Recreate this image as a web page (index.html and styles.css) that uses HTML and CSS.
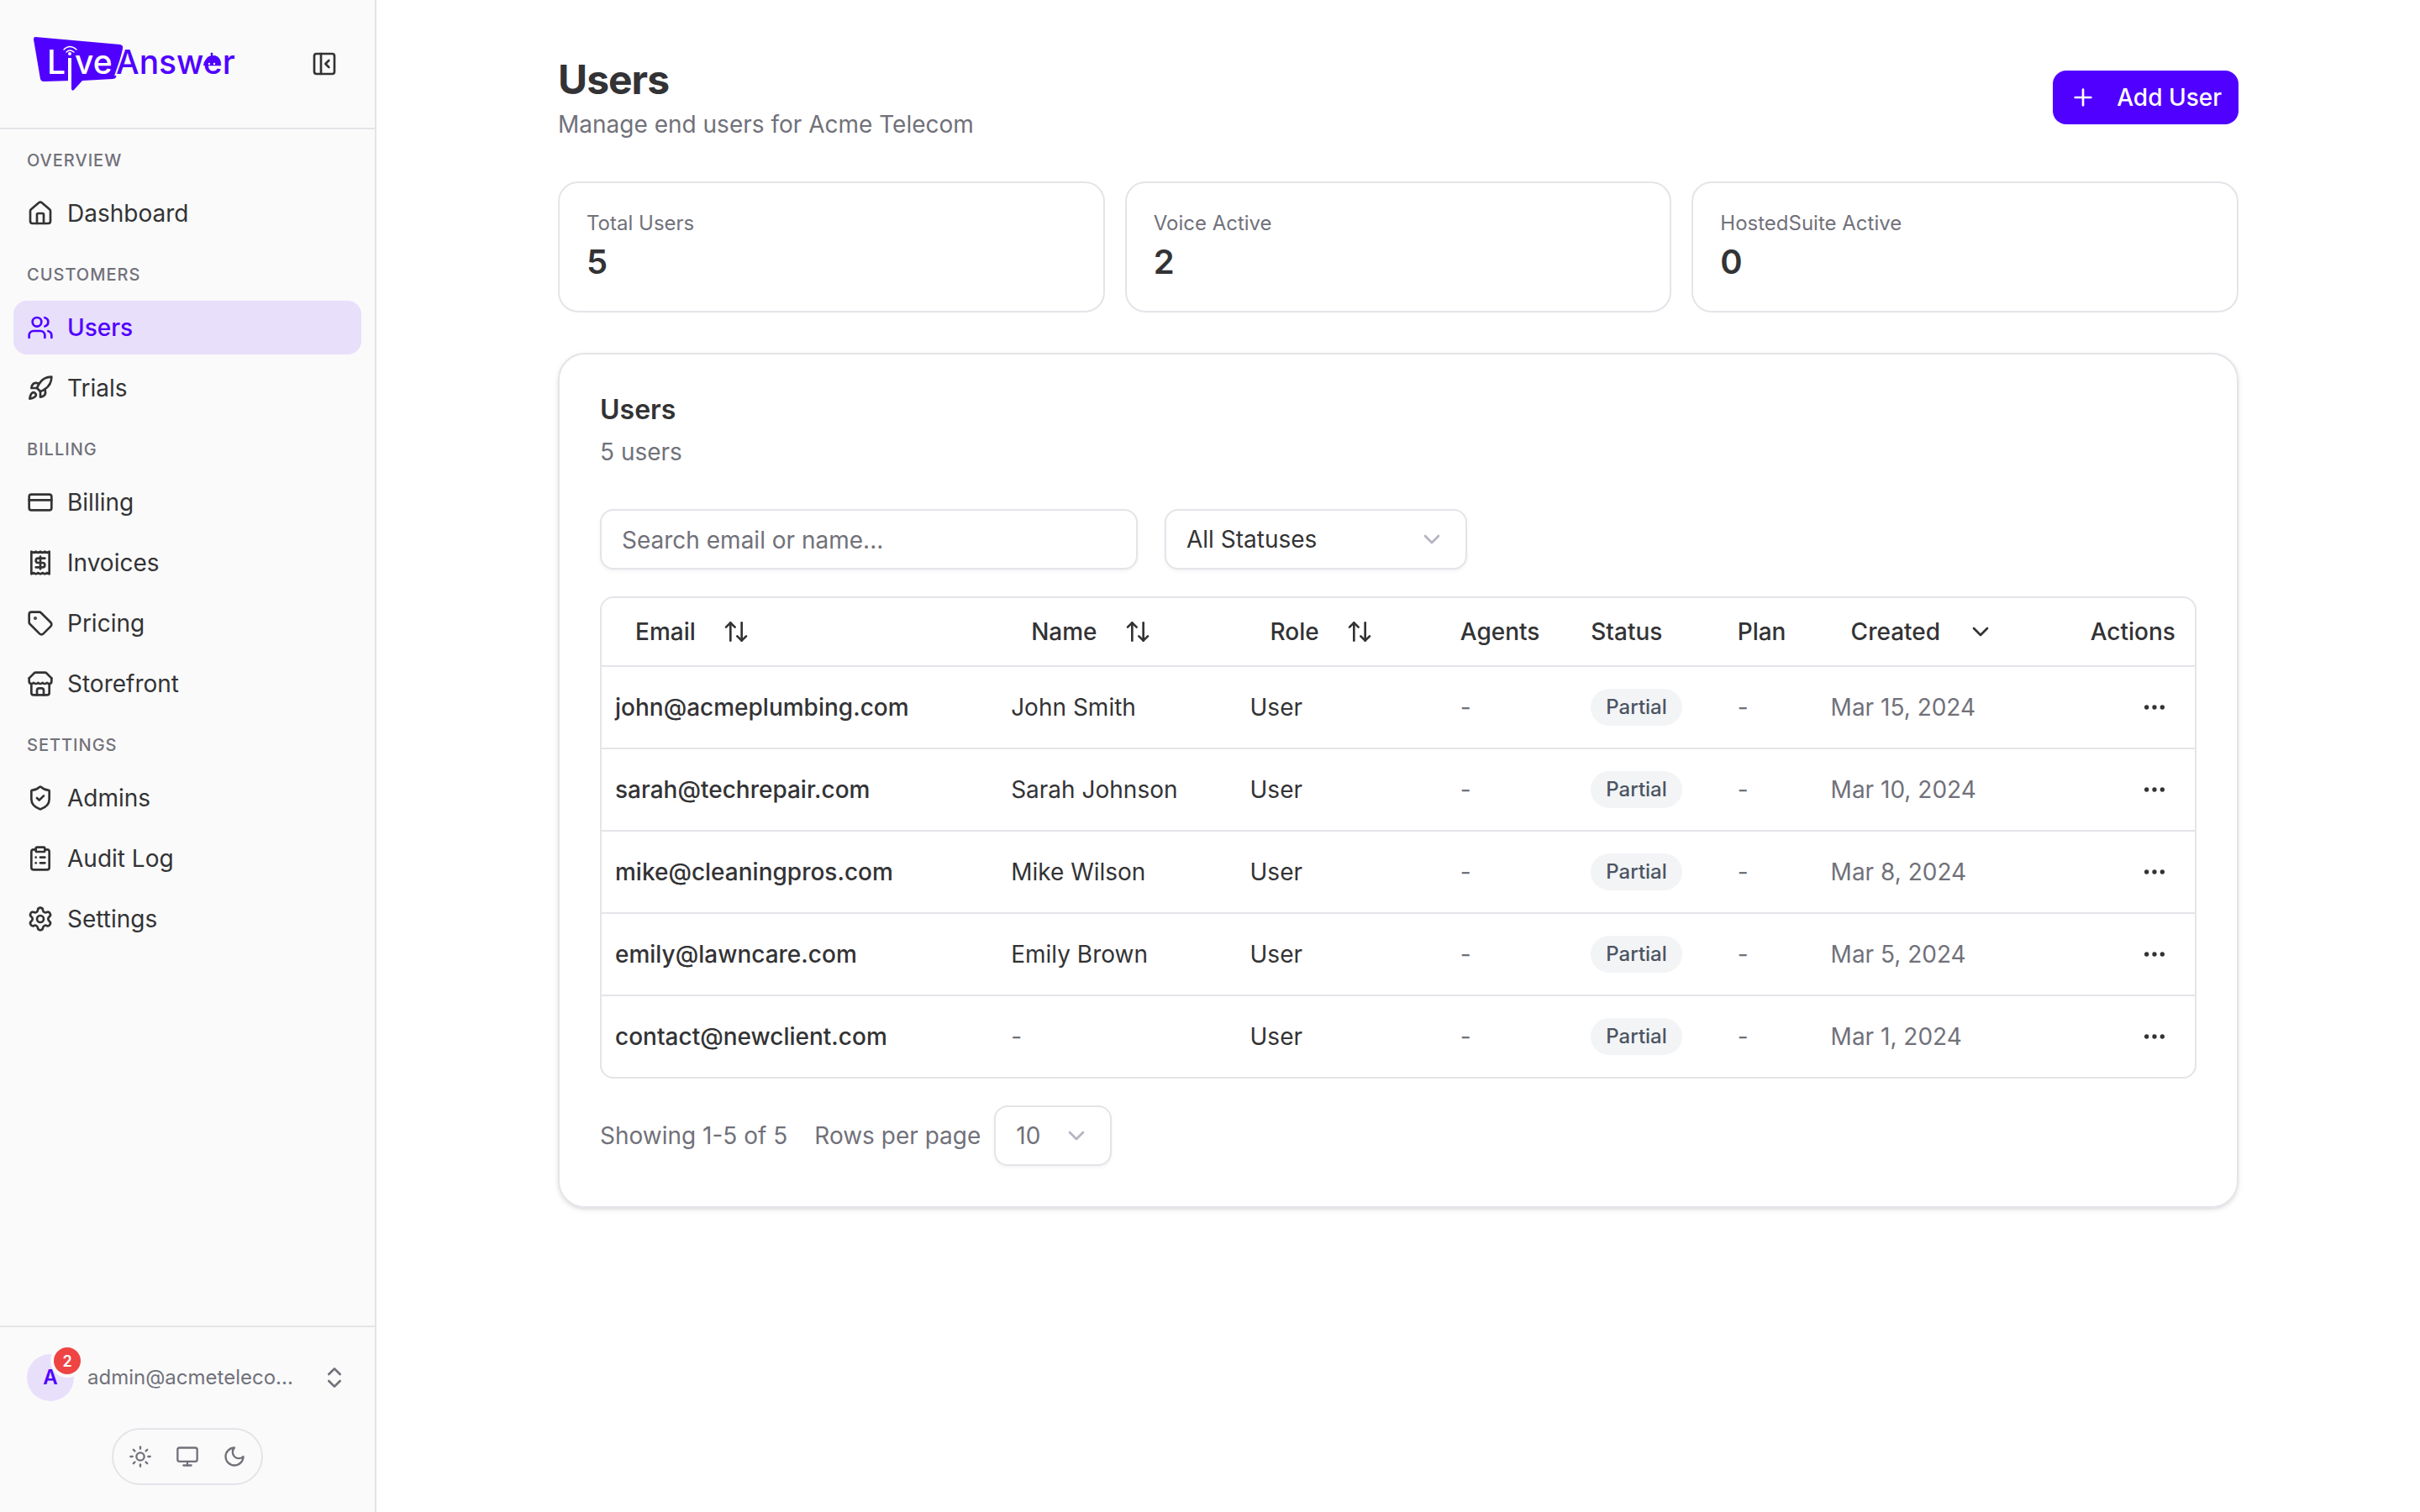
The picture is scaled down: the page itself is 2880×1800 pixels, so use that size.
FILE: index.html
```html
<!DOCTYPE html>
<html lang="en">
<head>
<meta charset="utf-8">
<title>Users - LiveAnswer</title>
<meta name="viewport" content="width=device-width, initial-scale=1">
<link rel="stylesheet" href="styles.css">
</head>
<body>
<svg class="sprite" aria-hidden="true">
  <symbol id="i-panel" viewBox="0 0 24 24"><rect width="18" height="18" x="3" y="3" rx="2"/><path d="M9 3v18"/><path d="m16 15-3-3 3-3"/></symbol>
  <symbol id="i-house" viewBox="0 0 24 24"><path d="M15 21v-8a1 1 0 0 0-1-1h-4a1 1 0 0 0-1 1v8"/><path d="M3 10a2 2 0 0 1 .709-1.528l7-5.999a2 2 0 0 1 2.582 0l7 5.999A2 2 0 0 1 21 10v9a2 2 0 0 1-2 2H5a2 2 0 0 1-2-2z"/></symbol>
  <symbol id="i-users" viewBox="0 0 24 24"><path d="M16 21v-2a4 4 0 0 0-4-4H6a4 4 0 0 0-4 4v2"/><circle cx="9" cy="7" r="4"/><path d="M22 21v-2a4 4 0 0 0-3-3.87"/><path d="M16 3.13a4 4 0 0 1 0 7.75"/></symbol>
  <symbol id="i-rocket" viewBox="0 0 24 24"><path d="M4.5 16.5c-1.5 1.26-2 5-2 5s3.74-.5 5-2c.71-.84.7-2.13-.09-2.91a2.18 2.18 0 0 0-2.91-.09z"/><path d="m12 15-3-3a22 22 0 0 1 2-3.95A12.88 12.88 0 0 1 22 2c0 2.72-.78 7.5-6 11a22.35 22.35 0 0 1-4 2z"/><path d="M9 12H4s.55-3.03 2-4c1.62-1.08 5 0 5 0"/><path d="M12 15v5s3.03-.55 4-2c1.08-1.62 0-5 0-5"/></symbol>
  <symbol id="i-card" viewBox="0 0 24 24"><rect width="20" height="14" x="2" y="5" rx="2"/><path d="M2 10h20"/></symbol>
  <symbol id="i-receipt" viewBox="0 0 24 24"><path d="M4 2v20l2-1 2 1 2-1 2 1 2-1 2 1 2-1 2 1V2l-2 1-2-1-2 1-2-1-2 1-2-1-2 1Z"/><path d="M16 8h-6a2 2 0 1 0 0 4h4a2 2 0 1 1 0 4H8"/><path d="M12 17.500v-11"/></symbol>
  <symbol id="i-tag" viewBox="0 0 24 24"><path d="M12.586 2.586A2 2 0 0 0 11.172 2H4a2 2 0 0 0-2 2v7.172a2 2 0 0 0 .586 1.414l8.704 8.704a2.426 2.426 0 0 0 3.420 0l6.580-6.580a2.426 2.426 0 0 0 0-3.420z"/><circle cx="7.500" cy="7.500" r=".5" fill="currentColor"/></symbol>
  <symbol id="i-store" viewBox="0 0 24 24"><path d="m2 7 4.410-4.410A2 2 0 0 1 7.830 2h8.340a2 2 0 0 1 1.420.590L22 7"/><path d="M4 12v8a2 2 0 0 0 2 2h12a2 2 0 0 0 2-2v-8"/><path d="M15 22v-4a2 2 0 0 0-2-2h-2a2 2 0 0 0-2 2v4"/><path d="M22 7v3a2 2 0 0 1-2 2a2.700 2.700 0 0 1-1.590-.630.700.700 0 0 0-.820 0A2.700 2.700 0 0 1 16 12a2.700 2.700 0 0 1-1.590-.630.700.700 0 0 0-.820 0A2.700 2.700 0 0 1 12 12a2.700 2.700 0 0 1-1.590-.630.700.700 0 0 0-.820 0A2.700 2.700 0 0 1 8 12a2.700 2.700 0 0 1-1.590-.630.700.700 0 0 0-.820 0A2.700 2.700 0 0 1 4 12a2 2 0 0 1-2-2V7"/></symbol>
  <symbol id="i-shield" viewBox="0 0 24 24"><path d="M20 13c0 5-3.500 7.500-7.660 8.950a1 1 0 0 1-.670-.010C7.500 20.500 4 18 4 13V6a1 1 0 0 1 1-1c2 0 4.500-1.200 6.240-2.720a1.170 1.170 0 0 1 1.520 0C14.510 3.810 17 5 19 5a1 1 0 0 1 1 1z"/><path d="m9 12 2 2 4-4"/></symbol>
  <symbol id="i-clipboard" viewBox="0 0 24 24"><rect width="8" height="4" x="8" y="2" rx="1"/><path d="M16 4h2a2 2 0 0 1 2 2v14a2 2 0 0 1-2 2H6a2 2 0 0 1-2-2V6a2 2 0 0 1 2-2h2"/><path d="M12 11h4"/><path d="M12 16h4"/><path d="M8 11h.01"/><path d="M8 16h.01"/></symbol>
  <symbol id="i-gear" viewBox="0 0 24 24"><path d="M9.671 4.136a2.340 2.340 0 0 1 4.659 0 2.340 2.340 0 0 0 3.319 1.915 2.340 2.340 0 0 1 2.330 4.033 2.340 2.340 0 0 0 0 3.831 2.340 2.340 0 0 1-2.330 4.033 2.340 2.340 0 0 0-3.319 1.915 2.340 2.340 0 0 1-4.659 0 2.340 2.340 0 0 0-3.320-1.915 2.340 2.340 0 0 1-2.330-4.033 2.340 2.340 0 0 0 0-3.831A2.340 2.340 0 0 1 6.350 6.051a2.340 2.340 0 0 0 3.319-1.915"/><circle cx="12" cy="12" r="3"/></symbol>
  <symbol id="i-updown" viewBox="0 0 24 24"><path d="m7 15 5 5 5-5"/><path d="m7 9 5-5 5 5"/></symbol>
  <symbol id="i-sun" viewBox="0 0 24 24"><circle cx="12" cy="12" r="4"/><path d="M12 2v2"/><path d="M12 20v2"/><path d="m4.930 4.930 1.410 1.410"/><path d="m17.660 17.660 1.410 1.410"/><path d="M2 12h2"/><path d="M20 12h2"/><path d="m6.340 17.660-1.410 1.410"/><path d="m19.070 4.930-1.410 1.410"/></symbol>
  <symbol id="i-monitor" viewBox="0 0 24 24"><rect width="20" height="14" x="2" y="3" rx="2"/><path d="M8 21h8"/><path d="M12 17v4"/></symbol>
  <symbol id="i-moon" viewBox="0 0 24 24"><path d="M12 3a6 6 0 0 0 9 9 9 9 0 1 1-9-9Z"/></symbol>
  <symbol id="i-plus" viewBox="0 0 24 24"><path d="M5 12h14"/><path d="M12 5v14"/></symbol>
  <symbol id="i-sort" viewBox="0 0 24 24"><path d="m21 16-4 4-4-4"/><path d="M17 20V4"/><path d="m3 8 4-4 4 4"/><path d="M7 4v16"/></symbol>
  <symbol id="i-down" viewBox="0 0 24 24"><path d="m6 9 6 6 6-6"/></symbol>
  <symbol id="i-dots" viewBox="0 0 24 24"><circle cx="12" cy="12" r="1"/><circle cx="19" cy="12" r="1"/><circle cx="5" cy="12" r="1"/></symbol>
</svg>

<div class="app">
  <aside class="sidebar">
    <header class="brand">
      <a href="#" class="brand-link" aria-label="LiveAnswer">
        <svg class="logo" viewBox="0 0 244 68">
          <path class="logo-fill" d="M4 2 105 11Q109 12 108 16L100 50Q99 52 96 52L60 54 50 65Q48 67 47 64V54L14 55Q11 55 10 52L2 5Q2 2 4 2Z"/>
          <path class="logo-wave" d="M38 17q7-7 15 0M41 20q4-4 9 0"/>
          <circle class="logo-dot" cx="45" cy="22" r="2"/>
          <path class="logo-stem" d="M45 27V60"/>
          <text class="logo-live" x="18" y="46">L</text>
          <text class="logo-live" x="51" y="46">ve</text>
          <text class="logo-answer" x="100" y="46">Answer</text>
          <path class="logo-fill" d="M204 36a10 10 0 0 1 20 0zM213 22h2v5h-2z"/>
          <circle class="logo-fill" cx="214" cy="22" r="1.500"/>
          <circle class="logo-dot" cx="211" cy="34" r="1.200"/>
          <circle class="logo-dot" cx="217" cy="34" r="1.200"/>
        </svg>
      </a>
      <button class="icon-button" type="button" aria-label="Collapse sidebar"><svg class="icon"><use href="#i-panel"/></svg></button>
    </header>

    <nav class="nav" aria-label="Main">
      <h2 class="nav-label">Overview</h2>
      <a class="nav-item" href="#"><svg class="icon"><use href="#i-house"/></svg>Dashboard</a>
      <h2 class="nav-label">Customers</h2>
      <a class="nav-item nav-item-active" href="#" aria-current="page"><svg class="icon"><use href="#i-users"/></svg>Users</a>
      <a class="nav-item" href="#"><svg class="icon"><use href="#i-rocket"/></svg>Trials</a>
      <h2 class="nav-label">Billing</h2>
      <a class="nav-item" href="#"><svg class="icon"><use href="#i-card"/></svg>Billing</a>
      <a class="nav-item" href="#"><svg class="icon"><use href="#i-receipt"/></svg>Invoices</a>
      <a class="nav-item" href="#"><svg class="icon"><use href="#i-tag"/></svg>Pricing</a>
      <a class="nav-item" href="#"><svg class="icon"><use href="#i-store"/></svg>Storefront</a>
      <h2 class="nav-label">Settings</h2>
      <a class="nav-item" href="#"><svg class="icon"><use href="#i-shield"/></svg>Admins</a>
      <a class="nav-item" href="#"><svg class="icon"><use href="#i-clipboard"/></svg>Audit Log</a>
      <a class="nav-item" href="#"><svg class="icon"><use href="#i-gear"/></svg>Settings</a>
    </nav>

    <footer class="account">
      <button class="account-button" type="button">
        <span class="avatar">A<span class="avatar-count">2</span></span>
        <span class="account-email">admin@acmeteleco...</span>
        <svg class="icon"><use href="#i-updown"/></svg>
      </button>
      <div class="theme" role="group" aria-label="Theme">
        <button class="theme-button" type="button" aria-label="Light"><svg class="icon icon-small"><use href="#i-sun"/></svg></button>
        <button class="theme-button" type="button" aria-label="System"><svg class="icon icon-small"><use href="#i-monitor"/></svg></button>
        <button class="theme-button" type="button" aria-label="Dark"><svg class="icon icon-small"><use href="#i-moon"/></svg></button>
      </div>
    </footer>
  </aside>

  <main class="main">
    <div class="content">
      <header class="page-header">
        <div>
          <h1 class="page-title">Users</h1>
          <p class="muted">Manage end users for Acme Telecom</p>
        </div>
        <button class="primary-button" type="button"><svg class="icon"><use href="#i-plus"/></svg>Add User</button>
      </header>

      <section class="stats" aria-label="Summary">
        <div class="stat"><p class="stat-label">Total Users</p><p class="stat-value">5</p></div>
        <div class="stat"><p class="stat-label">Voice Active</p><p class="stat-value">2</p></div>
        <div class="stat"><p class="stat-label">HostedSuite Active</p><p class="stat-value">0</p></div>
      </section>

      <section class="card">
        <header class="card-header">
          <h2 class="card-title">Users</h2>
          <p class="muted">5 users</p>
        </header>

        <div class="filters">
          <input class="field search" type="search" placeholder="Search email or name..." aria-label="Search email or name">
          <div class="select select-status">
            <select class="field" aria-label="Status"><option>All Statuses</option></select>
            <svg class="icon"><use href="#i-down"/></svg>
          </div>
        </div>

        <div class="table-frame">
          <table class="table">
            <colgroup><col class="col-email"><col class="col-name"><col class="col-role"><col class="col-agents"><col class="col-status"><col class="col-plan"><col class="col-created"><col></colgroup>
            <thead>
              <tr>
                <th scope="col"><button class="sort" type="button">Email<svg class="icon"><use href="#i-sort"/></svg></button></th>
                <th scope="col"><button class="sort" type="button">Name<svg class="icon"><use href="#i-sort"/></svg></button></th>
                <th scope="col"><button class="sort" type="button">Role<svg class="icon"><use href="#i-sort"/></svg></button></th>
                <th scope="col">Agents</th>
                <th scope="col">Status</th>
                <th scope="col">Plan</th>
                <th scope="col" aria-sort="descending"><button class="sort" type="button">Created<svg class="icon"><use href="#i-down"/></svg></button></th>
                <th scope="col" class="head-actions">Actions</th>
              </tr>
            </thead>
            <tbody>
              <tr><td class="strong">john@acmeplumbing.com</td><td>John Smith</td><td>User</td><td class="muted">-</td><td><span class="badge">Partial</span></td><td class="muted">-</td><td class="muted">Mar 15, 2024</td><td class="cell-actions"><button class="row-button" type="button" aria-label="Actions for John Smith"><svg class="icon"><use href="#i-dots"/></svg></button></td></tr>
              <tr><td class="strong">sarah@techrepair.com</td><td>Sarah Johnson</td><td>User</td><td class="muted">-</td><td><span class="badge">Partial</span></td><td class="muted">-</td><td class="muted">Mar 10, 2024</td><td class="cell-actions"><button class="row-button" type="button" aria-label="Actions for Sarah Johnson"><svg class="icon"><use href="#i-dots"/></svg></button></td></tr>
              <tr><td class="strong">mike@cleaningpros.com</td><td>Mike Wilson</td><td>User</td><td class="muted">-</td><td><span class="badge">Partial</span></td><td class="muted">-</td><td class="muted">Mar 8, 2024</td><td class="cell-actions"><button class="row-button" type="button" aria-label="Actions for Mike Wilson"><svg class="icon"><use href="#i-dots"/></svg></button></td></tr>
              <tr><td class="strong">emily@lawncare.com</td><td>Emily Brown</td><td>User</td><td class="muted">-</td><td><span class="badge">Partial</span></td><td class="muted">-</td><td class="muted">Mar 5, 2024</td><td class="cell-actions"><button class="row-button" type="button" aria-label="Actions for Emily Brown"><svg class="icon"><use href="#i-dots"/></svg></button></td></tr>
              <tr><td class="strong">contact@newclient.com</td><td class="muted">-</td><td>User</td><td class="muted">-</td><td><span class="badge">Partial</span></td><td class="muted">-</td><td class="muted">Mar 1, 2024</td><td class="cell-actions"><button class="row-button" type="button" aria-label="Actions for contact@newclient.com"><svg class="icon"><use href="#i-dots"/></svg></button></td></tr>
            </tbody>
          </table>
        </div>

        <footer class="pager muted">
          <span>Showing 1-5 of 5</span>
          <div class="pager-size">
            <label for="rows">Rows per page</label>
            <div class="select select-rows">
              <select class="field" id="rows"><option>10</option></select>
              <svg class="icon"><use href="#i-down"/></svg>
            </div>
          </div>
        </footer>
      </section>
    </div>
  </main>
</div>
</body>
</html>
```
FILE: styles.css
```css
:root {
  --text: #333335;
  --muted: #71717a;
  --line: #e4e4e9;
  --primary: #5000ff;
  --tint: #e8dffb;
  --sidebar: #fafafa;
}

* { box-sizing: border-box; margin: 0; }

body {
  font: 400 28px/40px Inter, "Liberation Sans", sans-serif;
  color: var(--text);
  background: #fff;
}

button, input, select {
  font: inherit;
  color: inherit;
  background: none;
  border: 0;
  padding: 0;
}

a { color: inherit; text-decoration: none; }

.sprite { display: none; }

.icon {
  width: 32px;
  height: 32px;
  flex: none;
  fill: none;
  stroke: currentColor;
  stroke-width: 2;
  stroke-linecap: round;
  stroke-linejoin: round;
}

.icon-small { width: 28px; height: 28px; }

.muted { color: var(--muted); }

.app { display: flex; min-height: 100vh; }

/* Sidebar */
.sidebar {
  display: flex;
  flex-direction: column;
  flex: none;
  width: 448px;
  background: var(--sidebar);
  border-right: 2px solid var(--line);
}

.brand {
  display: flex;
  align-items: center;
  justify-content: space-between;
  height: 154px;
  padding: 0 28px 0 38px;
  border-bottom: 2px solid var(--line);
}

.brand-link { display: flex; }

.logo { width: 244px; height: 68px; }
.logo-fill { fill: var(--primary); }
.logo-dot { fill: #fff; }
.logo-wave { fill: none; stroke: #fff; stroke-width: 1.5; stroke-linecap: round; }
.logo-stem { stroke: #fff; stroke-width: 4; }
.logo-live, .logo-answer { font: 500 39px Inter, sans-serif; }
.logo-live { fill: #fff; }
.logo-answer { fill: var(--primary); stroke: var(--sidebar); stroke-width: 4; paint-order: stroke; }

.icon-button, .theme-button, .row-button {
  display: flex;
  align-items: center;
  justify-content: center;
}

.icon-button { width: 64px; height: 64px; }

.nav {
  display: flex;
  flex-direction: column;
  flex: 1;
  gap: 8px;
  padding: 4px 16px;
}

.nav-label {
  height: 64px;
  padding: 0 16px;
  font-size: 20px;
  font-weight: 500;
  line-height: 66px;
  letter-spacing: 1px;
  text-transform: uppercase;
  color: var(--muted);
}

.nav-label + .nav-item { margin-top: -8px; }

.nav-item {
  display: flex;
  align-items: center;
  gap: 16px;
  height: 64px;
  padding: 0 16px;
  border-radius: 16px;
}

.nav-item-active {
  background: var(--tint);
  color: var(--primary);
  font-weight: 500;
}

.account {
  display: flex;
  flex-direction: column;
  align-items: center;
  gap: 16px;
  padding: 16px 16px 32px;
  border-top: 2px solid var(--line);
  color: var(--muted);
}

.account-button {
  display: flex;
  align-items: center;
  gap: 16px;
  width: 100%;
  height: 88px;
  padding: 0 16px;
  text-align: left;
}

.avatar {
  position: relative;
  flex: none;
  width: 56px;
  height: 56px;
  border-radius: 50%;
  background: var(--tint);
  color: var(--primary);
  font-size: 24px;
  font-weight: 600;
  line-height: 56px;
  text-align: center;
}

.avatar-count {
  position: absolute;
  top: -8px;
  right: -8px;
  width: 32px;
  height: 32px;
  border-radius: 50%;
  background: #ef4444;
  box-shadow: 0 0 0 4px var(--sidebar);
  color: #fff;
  font-size: 18px;
  line-height: 34px;
}

.account-email {
  flex: 1;
  min-width: 0;
  overflow: hidden;
  font-size: 24px;
  text-overflow: ellipsis;
  white-space: nowrap;
}

.theme {
  display: flex;
  padding: 4px;
  border: 2px solid var(--line);
  border-radius: 34px;
}

.theme-button { width: 56px; height: 56px; }

/* Page */
.main { flex: 1; min-width: 0; padding: 64px; }

.content {
  display: flex;
  flex-direction: column;
  gap: 48px;
  max-width: 2000px;
  margin: 0 auto;
}

.page-header {
  display: flex;
  align-items: center;
  justify-content: space-between;
}

.page-title {
  margin-bottom: 2px;
  font-size: 48px;
  font-weight: 700;
  line-height: 62px;
  letter-spacing: -1px;
}

.primary-button {
  display: flex;
  align-items: center;
  gap: 24px;
  height: 64px;
  padding: 0 20px;
  border-radius: 16px;
  background: var(--primary);
  color: #fff;
  font-weight: 500;
}

.stats {
  display: grid;
  grid-template-columns: repeat(3, 1fr);
  gap: 24px;
}

.stat {
  padding: 32px;
  border: 2px solid var(--line);
  border-radius: 24px;
}

.stat-label { font-size: 24px; line-height: 32px; color: var(--muted); }
.stat-value { margin-top: 4px; font-size: 40px; font-weight: 600; line-height: 52px; }

.card {
  display: flex;
  flex-direction: column;
  gap: 32px;
  padding: 48px;
  border: 2px solid var(--line);
  border-radius: 32px;
  box-shadow: 0 2px 6px rgba(0, 0, 0, .1), 0 2px 4px -2px rgba(0, 0, 0, .1);
}

.card-header { display: grid; gap: 12px; padding-bottom: 16px; }
.card-title { font-size: 32px; font-weight: 600; line-height: 36px; }

.filters { display: flex; gap: 32px; }

.field {
  width: 100%;
  height: 72px;
  padding: 0 24px;
  border: 2px solid var(--line);
  border-radius: 16px;
  background: #fff;
  box-shadow: 0 2px 4px rgba(0, 0, 0, .05);
  appearance: none;
}

.field::placeholder { color: var(--muted); opacity: 1; }

.search { max-width: 640px; padding-top: 2px; }

.select { position: relative; }
.select .icon {
  position: absolute;
  top: 20px;
  right: 26px;
  color: #b5b3c4;
  pointer-events: none;
}
.select-status { width: 360px; }
.select-rows { width: 140px; }

/* Table */
.table-frame {
  overflow: hidden;
  border: 2px solid var(--line);
  border-radius: 16px;
}

.table {
  width: 100%;
  table-layout: fixed;
  border-collapse: separate;
  border-spacing: 0;
}

.col-email { width: 24.85%; }
.col-name { width: 15%; }
.col-role { width: 13.2%; }
.col-agents { width: 8.2%; }
.col-status { width: 9.2%; }
.col-plan { width: 5.85%; }
.col-created { width: 16.3%; }

.table th, .table td {
  padding: 0 16px;
  border-bottom: 2px solid var(--line);
  text-align: left;
  white-space: nowrap;
}

.table th { height: 82px; font-weight: 500; }
.table td { height: 98px; }
.table tbody tr:last-child td { height: 96px; border-bottom: 0; }

.sort {
  display: flex;
  align-items: center;
  gap: 32px;
  height: 64px;
  padding: 0 24px;
  font-weight: 500;
}

.table .head-actions { padding-right: 24px; text-align: right; }
.strong { font-weight: 500; }
.row-button { width: 64px; height: 64px; margin-left: auto; }

.badge {
  display: inline-block;
  padding: 0 18px;
  border-radius: 22px;
  background: #f3f4f6;
  color: #4b5563;
  font-size: 24px;
  font-weight: 500;
  line-height: 44px;
  vertical-align: middle;
}

.pager { display: flex; align-items: center; gap: 32px; }
.pager-size { display: flex; align-items: center; gap: 16px; }
```
